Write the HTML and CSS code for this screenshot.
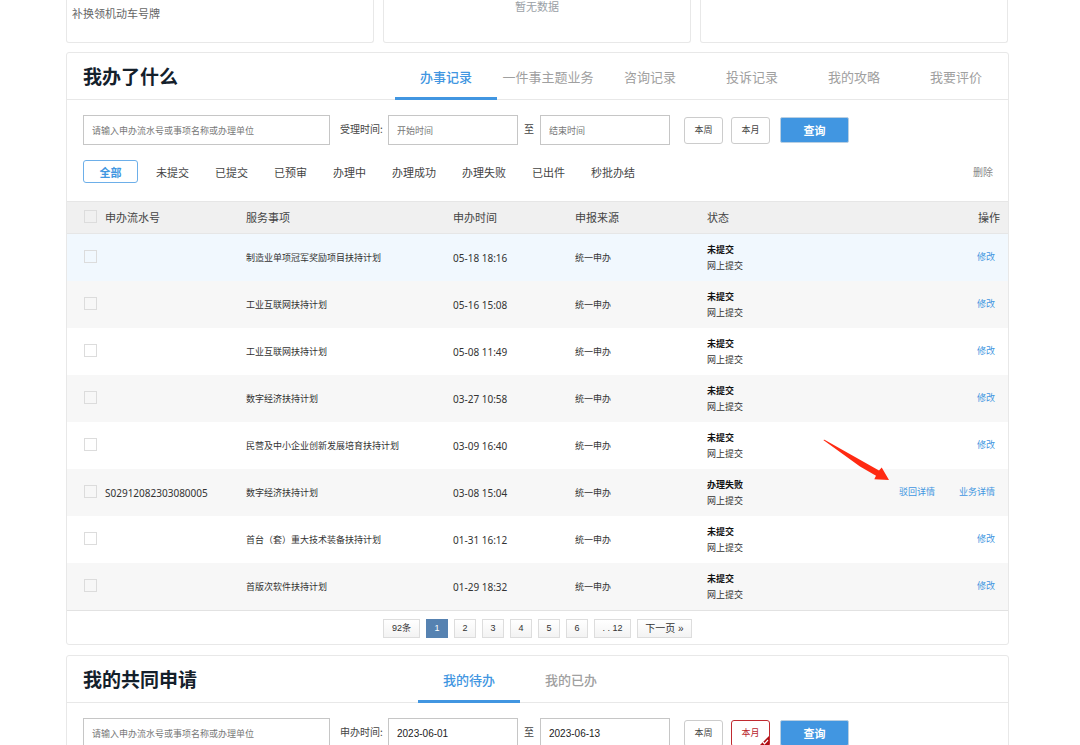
FILE: index.html
```
<!DOCTYPE html>
<html lang="zh-CN">
<head>
<meta charset="utf-8">
<title>我办了什么</title>
<meta name="viewport" content="width=device-width, initial-scale=1">
<link rel="stylesheet" href="styles.css">
</head>
<body>
<main class="page">
  <section class="cards">
    <div class="card"><a class="card-link" href="#">补换领机动车号牌</a></div>
    <div class="card card-empty">暂无数据</div>
    <div class="card"></div>
  </section>

  <section class="panel">
    <header class="panel-head">
      <h2 class="panel-title">我办了什么</h2>
      <nav class="tabs">
        <a class="tab active" href="#">办事记录</a>
        <a class="tab" href="#">一件事主题业务</a>
        <a class="tab" href="#">咨询记录</a>
        <a class="tab" href="#">投诉记录</a>
        <a class="tab" href="#">我的攻略</a>
        <a class="tab" href="#">我要评价</a>
      </nav>
    </header>
    <form class="search">
      <input class="field keyword" type="text" placeholder="请输入申办流水号或事项名称或办理单位" aria-label="关键字">
      <label class="search-label" for="start1">受理时间:</label>
      <input class="field date" id="start1" type="text" placeholder="开始时间">
      <label class="search-to" for="end1">至</label>
      <input class="field date" id="end1" type="text" placeholder="结束时间">
      <div class="quick">
        <button class="range" type="button">本周</button>
        <button class="range" type="button">本月</button>
      </div>
      <button class="query" type="button">查询</button>
    </form>
    <div class="filters">
      <button class="filter selected" type="button">全部</button>
      <button class="filter" type="button">未提交</button>
      <button class="filter" type="button">已提交</button>
      <button class="filter" type="button">已预审</button>
      <button class="filter" type="button">办理中</button>
      <button class="filter" type="button">办理成功</button>
      <button class="filter" type="button">办理失败</button>
      <button class="filter" type="button">已出件</button>
      <button class="filter" type="button">秒批办结</button>
      <button class="delete" type="button">删除</button>
    </div>
    <table class="records">
      <colgroup>
        <col class="col-check"><col class="col-serial"><col class="col-item"><col class="col-time"><col class="col-source"><col class="col-status"><col>
      </colgroup>
      <thead>
        <tr><th class="check"><input type="checkbox" aria-label="全选"></th><th>申办流水号</th><th>服务事项</th><th>申办时间</th><th>申报来源</th><th>状态</th><th class="ops">操作</th></tr>
      </thead>
      <tbody>
        <tr class="hover"><td class="check"><input type="checkbox" aria-label="选择"></td><td class="num"></td><td>制造业单项冠军奖励项目扶持计划</td><td class="num">05-18 18:16</td><td>统一申办</td><td><b>未提交</b><span class="sub">网上提交</span></td><td class="ops"><a href="#">修改</a></td></tr>
        <tr><td class="check"><input type="checkbox" aria-label="选择"></td><td class="num"></td><td>工业互联网扶持计划</td><td class="num">05-16 15:08</td><td>统一申办</td><td><b>未提交</b><span class="sub">网上提交</span></td><td class="ops"><a href="#">修改</a></td></tr>
        <tr><td class="check"><input type="checkbox" aria-label="选择"></td><td class="num"></td><td>工业互联网扶持计划</td><td class="num">05-08 11:49</td><td>统一申办</td><td><b>未提交</b><span class="sub">网上提交</span></td><td class="ops"><a href="#">修改</a></td></tr>
        <tr><td class="check"><input type="checkbox" aria-label="选择"></td><td class="num"></td><td>数字经济扶持计划</td><td class="num">03-27 10:58</td><td>统一申办</td><td><b>未提交</b><span class="sub">网上提交</span></td><td class="ops"><a href="#">修改</a></td></tr>
        <tr><td class="check"><input type="checkbox" aria-label="选择"></td><td class="num"></td><td>民营及中小企业创新发展培育扶持计划</td><td class="num">03-09 16:40</td><td>统一申办</td><td><b>未提交</b><span class="sub">网上提交</span></td><td class="ops"><a href="#">修改</a></td></tr>
        <tr><td class="check"><input type="checkbox" aria-label="选择"></td><td class="num">S02912082303080005</td><td>数字经济扶持计划</td><td class="num">03-08 15:04</td><td>统一申办</td><td><b>办理失败</b><span class="sub">网上提交</span></td><td class="ops"><a href="#">驳回详情</a><a href="#">业务详情</a><svg class="arrow" width="68" height="42" viewBox="0 0 68 42" aria-hidden="true"><path d="M1.3 1 L2.5 .8 L57 31.5 L59.7 28.5 L67 41 L52.3 40.3 L54 36.8 L38 27.5 Z" fill="#ff2a12"/></svg></td></tr>
        <tr><td class="check"><input type="checkbox" aria-label="选择"></td><td class="num"></td><td>首台（套）重大技术装备扶持计划</td><td class="num">01-31 16:12</td><td>统一申办</td><td><b>未提交</b><span class="sub">网上提交</span></td><td class="ops"><a href="#">修改</a></td></tr>
        <tr><td class="check"><input type="checkbox" aria-label="选择"></td><td class="num"></td><td>首版次软件扶持计划</td><td class="num">01-29 18:32</td><td>统一申办</td><td><b>未提交</b><span class="sub">网上提交</span></td><td class="ops"><a href="#">修改</a></td></tr>
      </tbody>
    </table>
    <nav class="pager" aria-label="分页">
      <span class="page-btn wide">92条</span>
      <a class="page-btn current" href="#">1</a>
      <a class="page-btn" href="#">2</a>
      <a class="page-btn" href="#">3</a>
      <a class="page-btn" href="#">4</a>
      <a class="page-btn" href="#">5</a>
      <a class="page-btn" href="#">6</a>
      <a class="page-btn wide" href="#">. . 12</a>
      <a class="page-btn next" href="#">下一页 »</a>
    </nav>
  </section>

  <section class="panel">
    <header class="panel-head">
      <h2 class="panel-title title-wide">我的共同申请</h2>
      <nav class="tabs">
        <a class="tab active" href="#">我的待办</a>
        <a class="tab idle" href="#">我的已办</a>
      </nav>
    </header>
    <form class="search">
      <input class="field keyword" type="text" placeholder="请输入申办流水号或事项名称或办理单位" aria-label="关键字">
      <label class="search-label" for="start2">申办时间:</label>
      <input class="field date" id="start2" type="text" value="2023-06-01">
      <label class="search-to" for="end2">至</label>
      <input class="field date" id="end2" type="text" value="2023-06-13">
      <div class="quick">
        <button class="range" type="button">本周</button>
        <button class="range chosen" type="button">本月<svg class="corner" width="10" height="10" viewBox="0 0 10 10" aria-hidden="true"><path d="M10 0V10H0Z" fill="#b00d14"/><path d="M4 6l1.5 1.8L9 4" fill="none" stroke="#fff" stroke-width="1.2"/></svg></button>
      </div>
      <button class="query" type="button">查询</button>
    </form>
  </section>
</main>
</body>
</html>
```
FILE: styles.css
```
* {
  box-sizing: border-box;
}

body {
  margin: 0;
  background: #fff;
  color: #444;
  font-family: "Noto Sans CJK SC", sans-serif;
  font-size: 9px;
  line-height: 16px;
}

a {
  color: #4196e1;
  text-decoration: none;
}

button,
input {
  margin: 0;
  font: inherit;
  color: inherit;
}

.page {
  height: 100vh;
  overflow: hidden;
  padding: 0 71px 0 66px;
}

.cards {
  display: grid;
  grid-template-columns: repeat(3, 1fr);
  gap: 9px;
  padding-right: 1px;
}

.card {
  height: 43px;
  padding: 5px;
  border: 1px solid #e8e8e8;
  border-top: 0;
  border-radius: 0 0 3px 3px;
  font-size: 11px;
}

.card-link {
  color: #666;
}

.card-empty {
  padding-top: 0;
  line-height: 13px;
  color: #9a9fa6;
  text-align: center;
}

.panel {
  margin: 9px 0 10px;
  border: 1px solid #e8e8e8;
  border-radius: 3px;
}

.panel-head {
  display: flex;
  height: 47px;
  padding-left: 16px;
  border-bottom: 1px solid #e8e8e8;
}

.panel-title {
  flex: none;
  width: 312px;
  margin: 0;
  font-size: 19px;
  line-height: 46px;
  color: #14202b;
}

.title-wide {
  width: 335px;
}

.tabs {
  display: flex;
  height: 47px;
}

.tab {
  width: 102px;
  border-bottom: 3px solid transparent;
  font-size: 13px;
  line-height: 48px;
  color: #a0a0a0;
  text-align: center;
  white-space: nowrap;
}

.tab.active {
  border-color: #4196e1;
  color: #4196e1;
  font-weight: 500;
}

.tab.idle {
  font-weight: 500;
}

.search {
  display: flex;
  align-items: center;
  padding: 15px 16px;
}

.field {
  height: 30px;
  padding: 0 8px;
  border: 1px solid #c6c6c6;
  border-radius: 0;
  background: #fff;
  outline: none;
}

.field::placeholder {
  color: #777;
  opacity: 1;
}

.keyword {
  width: 247px;
}

.date {
  width: 130px;
  font-family: "Liberation Sans", "Noto Sans CJK SC", sans-serif;
  font-size: 10px;
  color: #222;
}

.date::placeholder {
  font-size: 9px;
}

.search-label {
  width: 58px;
  padding: 0 0 2px 10px;
  font-size: 10px;
  white-space: nowrap;
}

.search-to {
  width: 22px;
  padding-bottom: 2px;
  font-size: 10px;
  text-align: center;
}

.quick {
  display: flex;
  gap: 8px;
  margin: 0 10px 0 14px;
}

.range {
  position: relative;
  width: 39px;
  height: 27px;
  padding: 0;
  border: 1px solid #ccc;
  border-radius: 3px;
  background: #fff;
}

.range.chosen {
  border-color: #c02a30;
  color: #b8252c;
}

.corner {
  position: absolute;
  right: 0;
  bottom: 0;
}

.query {
  width: 69px;
  height: 26px;
  padding: 0;
  border: 1px solid #b9cfe2;
  border-radius: 2px;
  background: #4196e1;
  color: #fff;
  font-size: 11px;
  font-weight: 700;
}

.filters {
  display: flex;
  align-items: center;
  gap: 26px;
  padding: 0 15px 18px 16px;
}

.filter,
.delete {
  height: 23px;
  padding: 0;
  border: 0;
  background: none;
  font-size: 11px;
  color: #444;
}

.filter.selected {
  width: 55px;
  margin-right: -8px;
  border: 1px solid #6dafe9;
  border-radius: 3px;
  color: #4196e1;
  font-weight: 700;
}

.delete {
  margin-left: auto;
  font-size: 10px;
  color: #888;
}

.records {
  width: 100%;
  border-collapse: separate;
  border-spacing: 0;
  table-layout: fixed;
  border-bottom: 1px solid #e2e2e2;
}

.col-check {
  width: 38px;
}

.col-serial {
  width: 141px;
}

.col-item {
  width: 207px;
}

.col-time {
  width: 122px;
}

.col-source {
  width: 132px;
}

.col-status {
  width: 120px;
}

.records th {
  height: 33px;
  padding: 0 0 2px;
  border-top: 1px solid #e6e6e6;
  border-bottom: 1px solid #e6e6e6;
  background: #f0f0f0;
  font-size: 11px;
  font-weight: 400;
  text-align: left;
}

.records td {
  height: 47px;
  padding: 0;
  color: #333;
  white-space: nowrap;
}

.records tbody tr:nth-child(even) {
  background: #f7f7f7;
}

.records tbody .hover {
  background: #f1f8fe;
}

.records .num {
  font-family: "Noto Sans", sans-serif;
  font-size: 10px;
}

.records .check {
  padding-left: 17px;
}

.records td.check,
.records td.ops {
  padding-bottom: 2px;
}

.check input {
  display: block;
  width: 13px;
  height: 13px;
  appearance: none;
  border: 1px solid #dcdcdc;
}

.records b,
.sub {
  display: block;
}

.records b {
  color: #111;
}

.records .ops {
  position: relative;
  padding-right: 13px;
  text-align: right;
}

.records th.ops {
  padding-right: 8px;
}

.ops a + a {
  margin-left: 24px;
}

.arrow {
  position: absolute;
  top: -30px;
  right: 118px;
}

.pager {
  display: flex;
  justify-content: center;
  gap: 6px;
  padding: 8px 0 6px;
}

.page-btn {
  min-width: 22px;
  height: 19px;
  border: 1px solid #ddd;
  background: linear-gradient(#fff, #f3f3f3);
  color: #333;
  font-family: "Liberation Sans", "Noto Sans CJK SC", sans-serif;
  line-height: 17px;
  text-align: center;
}

.page-btn.wide {
  width: 37px;
}

.page-btn.next {
  width: 55px;
  font-size: 10px;
}

.page-btn.current {
  border-color: #5682b1;
  background: #5682b1;
  color: #fff;
}
```
